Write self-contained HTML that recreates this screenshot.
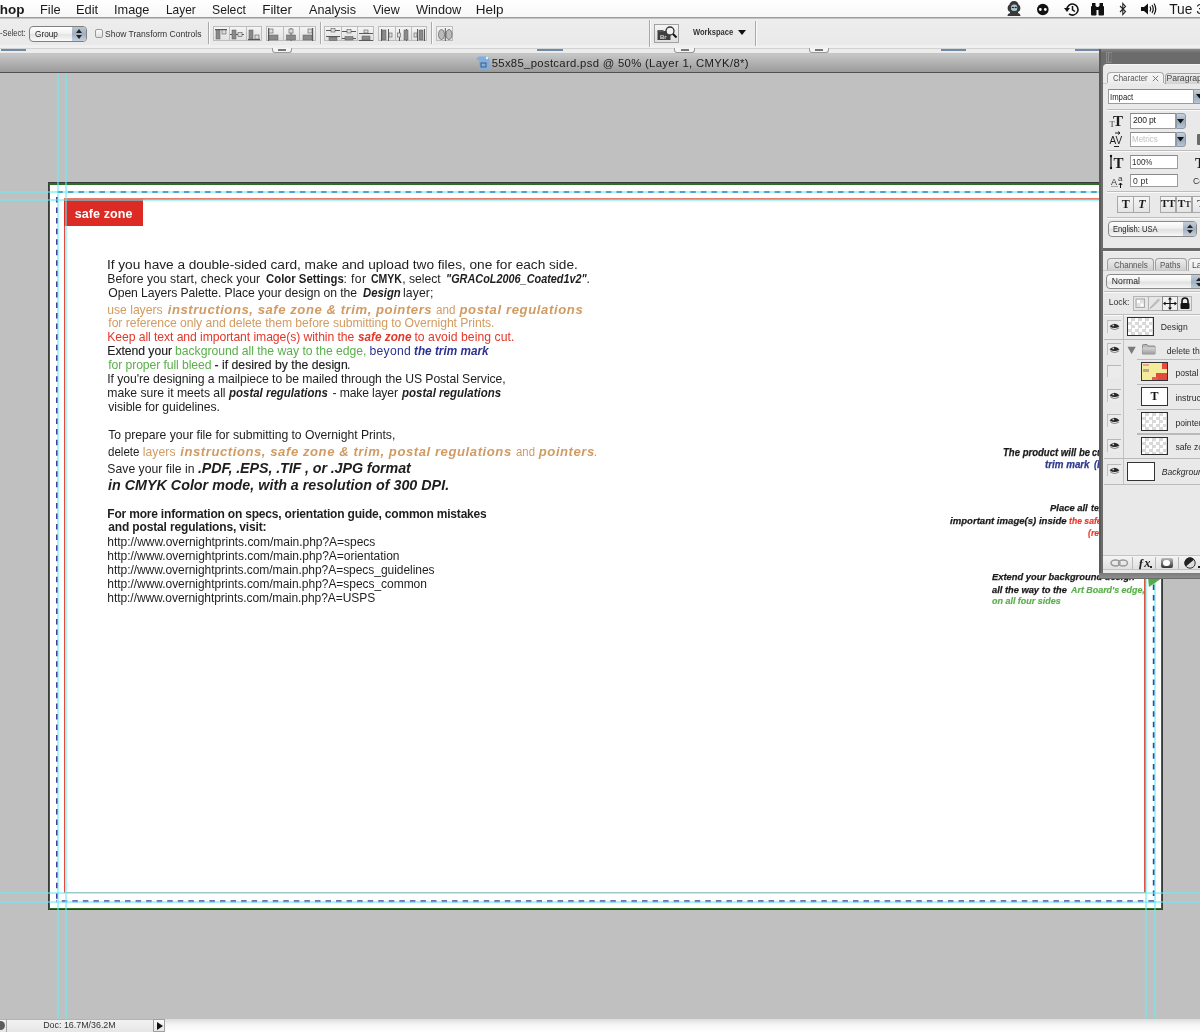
<!DOCTYPE html>
<html><head><meta charset="utf-8"><title>Photoshop</title>
<style>
html,body{margin:0;padding:0;}
html{background:#c0c0c0;}
body{width:1200px;height:1032px;overflow:hidden;position:relative;background:#c0c0c0;font-family:"Liberation Sans",sans-serif;}
div{position:absolute;box-sizing:border-box;}
.t{white-space:pre;line-height:1;}
.t b{font-weight:bold;}
body{filter:blur(0.3px);}

</style></head><body>
<div style='left:48px;top:182px;width:1115px;height:728px;background:#383c38'></div>
<div style='left:49px;top:183px;width:1113px;height:726px;background:#2e6e26'></div>
<div style='left:50px;top:185px;width:1111px;height:723px;background:#fff'></div>
<div style='left:63.6px;top:198px;width:1082.4px;height:695px;border:2px solid #e66a5a;border-top:2.8px solid #e87a6c;border-bottom:1.5px solid #e89a8c;border-left:1.6px solid #e04a3a;border-right:2px solid #e0553f'></div>
<div style='left:64px;top:199px;width:79px;height:27px;background:#dc2b24'></div>
<svg style='position:absolute;left:0;top:0' width='1200' height='1032'>
<line x1='56' y1='192' x2='1154' y2='192' stroke='#46409c' stroke-width='2' stroke-dasharray='5.5 5.05' stroke-dashoffset='-1.3'/>
<line x1='56' y1='901.3' x2='1154' y2='901.3' stroke='#46409c' stroke-width='2' stroke-dasharray='5.5 5.05' stroke-dashoffset='-5.75'/>
<line x1='57' y1='192' x2='57' y2='902' stroke='#46409c' stroke-width='2' stroke-dasharray='5.5 5.05' stroke-dashoffset='-5'/>
<line x1='1153.8' y1='192' x2='1153.8' y2='902' stroke='#46409c' stroke-width='2' stroke-dasharray='5.5 5.05' stroke-dashoffset='-2.2'/>
</svg>
<div style='left:57px;top:73px;width:2px;height:946px;background:rgba(96,236,248,0.55)'></div>
<div style='left:65px;top:73px;width:2px;height:946px;background:rgba(96,236,248,0.55)'></div>
<div style='left:1145px;top:73px;width:2px;height:946px;background:rgba(96,236,248,0.55)'></div>
<div style='left:1154px;top:73px;width:2px;height:946px;background:rgba(96,236,248,0.55)'></div>
<div style='left:0;top:191px;width:1200px;height:2px;background:rgba(96,236,248,0.55)'></div>
<div style='left:0;top:199px;width:1200px;height:2px;background:rgba(96,236,248,0.55)'></div>
<div style='left:0;top:892px;width:1200px;height:2px;background:rgba(96,236,248,0.55)'></div>
<div style='left:0;top:901px;width:1200px;height:2px;background:rgba(96,236,248,0.55)'></div>
<svg style='position:absolute;left:1148px;top:577px' width='16' height='12'><polygon points='0,1 14,1 1,10' fill='#4fae46'/></svg><div class='t' style='left:107.00px;top:258.00px;font-size:13.7px;letter-spacing:-0.032px;color:#1e1e1e;'>If you have a double-sided card, make and upload two files, one for each side.</div>
<div class='t' style='left:107.30px;top:273.00px;font-size:12.2px;letter-spacing:0.041px;color:#1e1e1e;'>Before you start, check your</div>
<div class='t' style='left:265.50px;top:273.00px;font-size:12.2px;letter-spacing:0.000px;transform:scaleX(0.9337);transform-origin:0 0;color:#1e1e1e;font-weight:bold;'>Color Settings</div>
<div class='t' style='left:343.60px;top:273.00px;font-size:12.2px;letter-spacing:0.350px;color:#1e1e1e;'>: for</div>
<div class='t' style='left:371.00px;top:273.00px;font-size:12.2px;letter-spacing:0.000px;transform:scaleX(0.8611);transform-origin:0 0;color:#1e1e1e;font-weight:bold;'>CMYK</div>
<div class='t' style='left:402.20px;top:273.00px;font-size:12.2px;letter-spacing:-0.029px;color:#1e1e1e;'>, select</div>
<div class='t' style='left:445.61px;top:273.00px;font-size:12.2px;letter-spacing:0.000px;transform:scaleX(0.8917);transform-origin:0 0;color:#1e1e1e;font-weight:bold;font-style:italic;'>"GRACoL2006_Coated1v2"</div>
<div class='t' style='left:586.60px;top:273.00px;font-size:12.2px;letter-spacing:0.000px;color:#1e1e1e;'>.</div>
<div class='t' style='left:108.30px;top:287.00px;font-size:12.2px;letter-spacing:-0.075px;color:#1e1e1e;'>Open Layers Palette. Place your design on the</div>
<div class='t' style='left:362.60px;top:287.00px;font-size:12.2px;letter-spacing:0.000px;transform:scaleX(0.9300);transform-origin:0 0;color:#1e1e1e;font-weight:bold;font-style:italic;'>Design</div>
<div class='t' style='left:403.00px;top:287.00px;font-size:12.2px;letter-spacing:0.120px;color:#1e1e1e;'>layer;</div>
<div class='t' style='left:107.30px;top:304.00px;font-size:12.2px;letter-spacing:-0.033px;color:#d19b62;'>use layers</div>
<div class='t' style='left:167.70px;top:303.00px;font-size:13.1px;letter-spacing:0.554px;color:#d19b62;font-weight:bold;font-style:italic;'>instructions, safe zone &amp; trim, pointers</div>
<div class='t' style='left:435.80px;top:304.00px;font-size:12.2px;letter-spacing:0.000px;transform:scaleX(0.9550);transform-origin:0 0;color:#d19b62;'>and</div>
<div class='t' style='left:459.40px;top:303.00px;font-size:13.1px;letter-spacing:0.624px;color:#d19b62;font-weight:bold;font-style:italic;'>postal regulations</div>
<div class='t' style='left:108.30px;top:317.00px;font-size:12.2px;letter-spacing:-0.056px;color:#d19b62;'>for reference only and delete them before submitting to Overnight Prints.</div>
<div class='t' style='left:107.30px;top:331.00px;font-size:12.2px;letter-spacing:-0.080px;color:#e2372b;'>Keep all text and important image(s) within the</div>
<div class='t' style='left:358.00px;top:331.00px;font-size:12.2px;letter-spacing:0.000px;transform:scaleX(0.9636);transform-origin:0 0;color:#e2372b;font-weight:bold;font-style:italic;'>safe zone</div>
<div class='t' style='left:414.40px;top:331.00px;font-size:12.2px;letter-spacing:0.056px;color:#e2372b;'>to avoid being cut.</div>
<div class='t' style='left:107.30px;top:345.00px;font-size:12.2px;letter-spacing:-0.040px;color:#1e1e1e;-webkit-text-stroke:0.15px #1e1e1e;'>Extend your</div>
<div class='t' style='left:175.00px;top:345.00px;font-size:12.2px;letter-spacing:-0.029px;color:#5aaf4b;'>background all the way to the edge,</div>
<div class='t' style='left:369.50px;top:345.00px;font-size:12.2px;letter-spacing:0.280px;color:#2d3290;'>beyond</div>
<div class='t' style='left:414.40px;top:345.00px;font-size:12.2px;letter-spacing:0.000px;transform:scaleX(0.9667);transform-origin:0 0;color:#2d3290;font-weight:bold;font-style:italic;'>the trim mark</div>
<div class='t' style='left:108.30px;top:359.00px;font-size:12.2px;letter-spacing:-0.095px;color:#5aaf4b;'>for proper full bleed</div>
<div class='t' style='left:214.60px;top:359.00px;font-size:12.2px;letter-spacing:0.012px;color:#1e1e1e;-webkit-text-stroke:0.15px #1e1e1e;'>- if desired by the design</div>
<div class='t' style='left:347.00px;top:359.00px;font-size:12.2px;letter-spacing:0.000px;color:#1e1e1e;'>.</div>
<div class='t' style='left:107.30px;top:373.00px;font-size:12.2px;letter-spacing:-0.068px;color:#1e1e1e;'>If you're designing a mailpiece to be mailed through the US Postal Service,</div>
<div class='t' style='left:107.30px;top:387.00px;font-size:12.2px;letter-spacing:-0.014px;color:#1e1e1e;'>make sure it meets all</div>
<div class='t' style='left:229.20px;top:387.00px;font-size:12.2px;letter-spacing:0.000px;transform:scaleX(0.9419);transform-origin:0 0;color:#1e1e1e;font-weight:bold;font-style:italic;'>postal regulations</div>
<div class='t' style='left:332.50px;top:387.00px;font-size:12.2px;letter-spacing:-0.145px;color:#1e1e1e;'>- make layer</div>
<div class='t' style='left:402.10px;top:387.00px;font-size:12.2px;letter-spacing:0.000px;transform:scaleX(0.9448);transform-origin:0 0;color:#1e1e1e;font-weight:bold;font-style:italic;'>postal regulations</div>
<div class='t' style='left:108.30px;top:401.00px;font-size:12.2px;letter-spacing:-0.068px;color:#1e1e1e;'>visible for guidelines.</div>
<div class='t' style='left:108.30px;top:429.00px;font-size:12.2px;letter-spacing:-0.029px;color:#1e1e1e;'>To prepare your file for submitting to Overnight Prints,</div>
<div class='t' style='left:108.30px;top:446.00px;font-size:12.2px;letter-spacing:0.000px;transform:scaleX(0.9485);transform-origin:0 0;color:#1e1e1e;'>delete</div>
<div class='t' style='left:142.75px;top:446.00px;font-size:12.2px;letter-spacing:0.060px;color:#d19b62;'>layers</div>
<div class='t' style='left:180.20px;top:445.00px;font-size:13.1px;letter-spacing:0.563px;color:#d19b62;font-weight:bold;font-style:italic;'>instructions, safe zone &amp; trim, postal regulations</div>
<div class='t' style='left:515.50px;top:446.00px;font-size:12.2px;letter-spacing:0.000px;transform:scaleX(0.9350);transform-origin:0 0;color:#d19b62;'>and</div>
<div class='t' style='left:538.80px;top:445.00px;font-size:13.1px;letter-spacing:0.543px;color:#d19b62;font-weight:bold;font-style:italic;'>pointers</div>
<div class='t' style='left:593.80px;top:446.00px;font-size:12.2px;letter-spacing:0.000px;color:#d19b62;'>.</div>
<div class='t' style='left:107.30px;top:463.00px;font-size:12.2px;letter-spacing:0.031px;color:#1e1e1e;'>Save your file in</div>
<div class='t' style='left:197.90px;top:461.00px;font-size:14.3px;letter-spacing:-0.100px;color:#1e1e1e;font-weight:bold;font-style:italic;'>.PDF, .EPS, .TIF , or .JPG format</div>
<div class='t' style='left:108.30px;top:478.00px;font-size:14.8px;letter-spacing:0.000px;transform:scaleX(0.9672);transform-origin:0 0;color:#1e1e1e;font-weight:bold;font-style:italic;'>in CMYK Color mode, with a resolution of 300 DPI.</div>
<div class='t' style='left:107.30px;top:508.00px;font-size:12px;letter-spacing:-0.197px;color:#1e1e1e;font-weight:bold;'>For more information on specs, orientation guide, common mistakes</div>
<div class='t' style='left:108.30px;top:521.00px;font-size:12px;letter-spacing:-0.152px;color:#1e1e1e;font-weight:bold;'>and postal regulations, visit:</div>
<div class='t' style='left:107.30px;top:536.00px;font-size:12px;letter-spacing:-0.024px;color:#1e1e1e;'>http://www.overnightprints.com/main.php?A=specs</div>
<div class='t' style='left:107.30px;top:550.00px;font-size:12px;letter-spacing:-0.031px;color:#1e1e1e;'>http://www.overnightprints.com/main.php?A=orientation</div>
<div class='t' style='left:107.30px;top:564.00px;font-size:12px;letter-spacing:-0.046px;color:#1e1e1e;'>http://www.overnightprints.com/main.php?A=specs_guidelines</div>
<div class='t' style='left:107.30px;top:578.00px;font-size:12px;letter-spacing:-0.042px;color:#1e1e1e;'>http://www.overnightprints.com/main.php?A=specs_common</div>
<div class='t' style='left:107.30px;top:592.00px;font-size:12px;letter-spacing:-0.058px;color:#1e1e1e;'>http://www.overnightprints.com/main.php?A=USPS</div>
<div class='t' style='left:74.75px;top:208.00px;font-size:12.5px;letter-spacing:0.088px;color:#fff;font-weight:bold;'>safe zone</div>
<div class='t' style='left:1002.81px;top:448.00px;font-size:10.2px;letter-spacing:0.000px;transform:scaleX(0.9380);transform-origin:0 0;color:#1b1b1b;-webkit-text-stroke:0.25px #1b1b1b;font-weight:bold;font-style:italic;'>The product will be</div>
<div class='t' style='left:1091.50px;top:448.00px;font-size:10.2px;letter-spacing:0.000px;transform:scaleX(0.9000);transform-origin:0 0;color:#1b1b1b;-webkit-text-stroke:0.25px #1b1b1b;font-weight:bold;font-style:italic;'>cut at</div>
<div class='t' style='left:1045.30px;top:460.00px;font-size:10.2px;letter-spacing:0.000px;transform:scaleX(0.9596);transform-origin:0 0;color:#2d3a90;-webkit-text-stroke:0.25px #2d3a90;font-weight:bold;font-style:italic;'>trim mark</div>
<div class='t' style='left:1094.00px;top:460.00px;font-size:10.2px;letter-spacing:0.000px;transform:scaleX(0.9000);transform-origin:0 0;color:#2d3a90;-webkit-text-stroke:0.25px #2d3a90;font-weight:bold;font-style:italic;'>(b</div>
<div class='t' style='left:1049.70px;top:503.00px;font-size:9.6px;letter-spacing:0.000px;transform:scaleX(0.9821);transform-origin:0 0;color:#1b1b1b;-webkit-text-stroke:0.25px #1b1b1b;font-weight:bold;font-style:italic;'>Place all</div>
<div class='t' style='left:1091.00px;top:503.00px;font-size:9.6px;letter-spacing:0.000px;transform:scaleX(0.9000);transform-origin:0 0;color:#1b1b1b;-webkit-text-stroke:0.25px #1b1b1b;font-weight:bold;font-style:italic;'>text</div>
<div class='t' style='left:949.50px;top:516.00px;font-size:9.6px;letter-spacing:0.000px;transform:scaleX(0.9991);transform-origin:0 0;color:#1b1b1b;-webkit-text-stroke:0.25px #1b1b1b;font-weight:bold;font-style:italic;'>important image(s) inside</div>
<div class='t' style='left:1069.00px;top:516.00px;font-size:9.6px;letter-spacing:0.000px;transform:scaleX(0.9000);transform-origin:0 0;color:#e8392c;-webkit-text-stroke:0.2px #e8392c;font-weight:bold;font-style:italic;'>the safe</div>
<div class='t' style='left:1088.40px;top:528.00px;font-size:9.6px;letter-spacing:0.000px;transform:scaleX(0.9000);transform-origin:0 0;color:#e8392c;-webkit-text-stroke:0.2px #e8392c;font-weight:bold;font-style:italic;'>(red</div>
<div class='t' style='left:991.90px;top:572.00px;font-size:9.8px;letter-spacing:0.000px;transform:scaleX(0.9540);transform-origin:0 0;color:#1b1b1b;-webkit-text-stroke:0.25px #1b1b1b;font-weight:bold;font-style:italic;'>Extend your background design</div>
<div class='t' style='left:991.90px;top:585.00px;font-size:9.8px;letter-spacing:0.000px;transform:scaleX(0.9494);transform-origin:0 0;color:#1b1b1b;-webkit-text-stroke:0.25px #1b1b1b;font-weight:bold;font-style:italic;'>all the way to the</div>
<div class='t' style='left:1071.00px;top:585.00px;font-size:9.8px;letter-spacing:0.000px;transform:scaleX(0.9086);transform-origin:0 0;color:#5aaf4b;-webkit-text-stroke:0.2px #5aaf4b;font-weight:bold;font-style:italic;'>Art Board's edge,</div>
<div class='t' style='left:991.90px;top:596.00px;font-size:9.8px;letter-spacing:0.000px;transform:scaleX(0.9133);transform-origin:0 0;color:#5aaf4b;-webkit-text-stroke:0.2px #5aaf4b;font-weight:bold;font-style:italic;'>on all four sides</div><div style='left:0;top:0;width:1200px;height:18px;background:linear-gradient(#ffffff,#f6f6f6)'></div>
<div style='left:0;top:17px;width:1200px;height:1px;background:#9c9c9c'></div>
<div style='left:0;top:18px;width:1200px;height:1px;background:#c4c4c4'></div>
<div style='left:0;top:19px;width:1200px;height:29px;background:linear-gradient(#ededed,#e9e9e9)'></div>
<div style='left:0;top:45px;width:1200px;height:3px;background:#f0f0f0'></div>
<div style='left:0;top:48px;width:1200px;height:1px;background:#d2d2d2'></div>
<div style='left:0;top:49px;width:1200px;height:4px;background:#ececec'></div>
<div style='left:1px;top:48.5px;width:25px;height:2px;background:#6f8aa6'></div>
<div style='left:537px;top:48.5px;width:26px;height:2px;background:#6f8aa6'></div>
<div style='left:941px;top:48.5px;width:25px;height:2px;background:#6f8aa6'></div>
<div style='left:1075px;top:48.5px;width:25px;height:2px;background:#6f8aa6'></div>
<div style='left:272px;top:48px;width:20px;height:5px;border:1px solid #9a9a9a;border-top:none;border-radius:0 0 3px 3px;background:#f4f4f4'></div><div style='left:278.0px;top:49px;width:8px;height:1.5px;background:#777'></div>
<div style='left:674px;top:48px;width:21px;height:5px;border:1px solid #9a9a9a;border-top:none;border-radius:0 0 3px 3px;background:#f4f4f4'></div><div style='left:680.5px;top:49px;width:8px;height:1.5px;background:#777'></div>
<div style='left:809px;top:48px;width:20px;height:5px;border:1px solid #9a9a9a;border-top:none;border-radius:0 0 3px 3px;background:#f4f4f4'></div><div style='left:815.0px;top:49px;width:8px;height:1.5px;background:#777'></div>
<div style='left:29px;top:26px;width:58px;height:16px;border:1px solid #808080;border-radius:4px;background:linear-gradient(#ffffff,#f2f2f2 45%,#e4e4e4 55%,#fafafa);overflow:hidden'><div style='left:42px;top:0;width:15px;height:14px;background:linear-gradient(#b9c5d2,#9fb0c2 50%,#c4d0dc)'></div></div>
<svg style='position:absolute;left:75px;top:28px' width='8' height='12'><polygon points='1,5 7,5 4,1' fill='#222'/><polygon points='1,7 7,7 4,11' fill='#222'/></svg>
<div style='left:94.5px;top:29px;width:8.5px;height:8.5px;border:1px solid #9a9a9a;border-radius:2px;background:linear-gradient(#fafafa,#e0e0e0)'></div>
<div style='left:207.5px;top:22px;width:1px;height:22px;background:#a9a9a9'></div><div style='left:208.5px;top:22px;width:1px;height:22px;background:#fafafa'></div>
<div style='left:212.5px;top:26px;width:49.80000000000001px;height:15px;border:1px solid #bdbdbd;background:linear-gradient(#f4f4f4,#e2e2e2)'></div><svg style='position:absolute;left:212.8px;top:26.5px' width='16' height='15'><rect x='2' y='2' width='12' height='1.2' fill='#5a5a5a'/><rect x='3' y='3' width='4' height='9' fill='#8a8a8a' stroke='#5a5a5a' stroke-width='0.5'/><rect x='9' y='3' width='4' height='4' fill='#ddd' stroke='#5a5a5a' stroke-width='0.6'/></svg><div style='left:229.1px;top:26px;width:1px;height:15px;background:#bdbdbd'></div><svg style='position:absolute;left:229.4px;top:26.5px' width='16' height='15'><rect x='1' y='7' width='14' height='1' fill='#5a5a5a'/><rect x='3' y='3' width='4' height='9' fill='#8a8a8a' stroke='#5a5a5a' stroke-width='0.5'/><rect x='9' y='5.5' width='4' height='4' fill='#ddd' stroke='#5a5a5a' stroke-width='0.6'/></svg><div style='left:245.7px;top:26px;width:1px;height:15px;background:#bdbdbd'></div><svg style='position:absolute;left:246.0px;top:26.5px' width='16' height='15'><rect x='2' y='12' width='12' height='1.2' fill='#5a5a5a'/><rect x='3' y='3' width='4' height='9' fill='#8a8a8a' stroke='#5a5a5a' stroke-width='0.5'/><rect x='9' y='8' width='4' height='4' fill='#ddd' stroke='#5a5a5a' stroke-width='0.6'/></svg>
<div style='left:265.9px;top:26px;width:49.80000000000001px;height:15px;border:1px solid #bdbdbd;background:linear-gradient(#f4f4f4,#e2e2e2)'></div><svg style='position:absolute;left:266.2px;top:26.5px' width='16' height='15'><rect x='2' y='1' width='1.2' height='13' fill='#5a5a5a'/><rect x='3' y='2' width='4' height='4' fill='#ddd' stroke='#5a5a5a' stroke-width='0.6'/><rect x='3' y='8' width='9' height='5' fill='#8a8a8a' stroke='#5a5a5a' stroke-width='0.5'/></svg><div style='left:282.5px;top:26px;width:1px;height:15px;background:#bdbdbd'></div><svg style='position:absolute;left:282.8px;top:26.5px' width='16' height='15'><rect x='7.5' y='1' width='1' height='13' fill='#5a5a5a'/><rect x='6' y='2' width='4' height='4' fill='#ddd' stroke='#5a5a5a' stroke-width='0.6'/><rect x='3.5' y='8' width='9' height='5' fill='#8a8a8a' stroke='#5a5a5a' stroke-width='0.5'/></svg><div style='left:299.1px;top:26px;width:1px;height:15px;background:#bdbdbd'></div><svg style='position:absolute;left:299.4px;top:26.5px' width='16' height='15'><rect x='13' y='1' width='1.2' height='13' fill='#5a5a5a'/><rect x='9' y='2' width='4' height='4' fill='#ddd' stroke='#5a5a5a' stroke-width='0.6'/><rect x='4' y='8' width='9' height='5' fill='#8a8a8a' stroke='#5a5a5a' stroke-width='0.5'/></svg>
<div style='left:319.5px;top:22px;width:1px;height:22px;background:#a9a9a9'></div><div style='left:320.5px;top:22px;width:1px;height:22px;background:#fafafa'></div>
<div style='left:324.4px;top:26px;width:49.5px;height:15px;border:1px solid #bdbdbd;background:linear-gradient(#f4f4f4,#e2e2e2)'></div><svg style='position:absolute;left:324.6px;top:26.5px' width='16' height='15'><rect x='1' y='3' width='14' height='1' fill='#5a5a5a'/><rect x='1' y='9' width='14' height='1' fill='#5a5a5a'/><rect x='6' y='1.5' width='4' height='3.5' fill='#ddd' stroke='#5a5a5a' stroke-width='0.6'/><rect x='4' y='10' width='8' height='3.5' fill='#8a8a8a' stroke='#5a5a5a' stroke-width='0.5'/></svg><div style='left:340.9px;top:26px;width:1px;height:15px;background:#bdbdbd'></div><svg style='position:absolute;left:341.1px;top:26.5px' width='16' height='15'><rect x='1' y='4' width='14' height='1' fill='#5a5a5a'/><rect x='1' y='11' width='14' height='1' fill='#5a5a5a'/><rect x='6' y='2.5' width='4' height='3.5' fill='#ddd' stroke='#5a5a5a' stroke-width='0.6'/><rect x='4' y='9.5' width='8' height='3.5' fill='#8a8a8a' stroke='#5a5a5a' stroke-width='0.5'/></svg><div style='left:357.4px;top:26px;width:1px;height:15px;background:#bdbdbd'></div><svg style='position:absolute;left:357.6px;top:26.5px' width='16' height='15'><rect x='1' y='6' width='14' height='1' fill='#5a5a5a'/><rect x='1' y='13' width='14' height='1' fill='#5a5a5a'/><rect x='6' y='3' width='4' height='3' fill='#ddd' stroke='#5a5a5a' stroke-width='0.6'/><rect x='4' y='9' width='8' height='4' fill='#8a8a8a' stroke='#5a5a5a' stroke-width='0.5'/></svg>
<div style='left:378.3px;top:26px;width:49.099999999999966px;height:15px;border:1px solid #bdbdbd;background:linear-gradient(#f4f4f4,#e2e2e2)'></div><svg style='position:absolute;left:378.5px;top:26.5px' width='16' height='15'><rect x='2' y='2' width='1' height='12' fill='#5a5a5a'/><rect x='9' y='2' width='1' height='12' fill='#5a5a5a'/><rect x='3' y='3' width='4' height='10' fill='#8a8a8a' stroke='#5a5a5a' stroke-width='0.5'/><rect x='10' y='6' width='3' height='4' fill='#ddd' stroke='#5a5a5a' stroke-width='0.6'/></svg><div style='left:394.7px;top:26px;width:1px;height:15px;background:#bdbdbd'></div><svg style='position:absolute;left:394.9px;top:26.5px' width='16' height='15'><rect x='4' y='2' width='1' height='12' fill='#5a5a5a'/><rect x='11' y='2' width='1' height='12' fill='#5a5a5a'/><rect x='2.5' y='6' width='3' height='4' fill='#ddd' stroke='#5a5a5a' stroke-width='0.6'/><rect x='9' y='3' width='4' height='10' fill='#8a8a8a' stroke='#5a5a5a' stroke-width='0.5'/></svg><div style='left:411.0px;top:26px;width:1px;height:15px;background:#bdbdbd'></div><svg style='position:absolute;left:411.2px;top:26.5px' width='16' height='15'><rect x='6' y='2' width='1' height='12' fill='#5a5a5a'/><rect x='13' y='2' width='1' height='12' fill='#5a5a5a'/><rect x='3' y='6' width='3' height='4' fill='#ddd' stroke='#5a5a5a' stroke-width='0.6'/><rect x='8' y='3' width='4' height='10' fill='#8a8a8a' stroke='#5a5a5a' stroke-width='0.5'/></svg>
<div style='left:431.4px;top:22px;width:1px;height:22px;background:#a9a9a9'></div><div style='left:432.4px;top:22px;width:1px;height:22px;background:#fafafa'></div>
<div style='left:436.1px;top:26px;width:16.899999999999977px;height:15px;border:1px solid #bdbdbd;background:linear-gradient(#f4f4f4,#e2e2e2)'></div><svg style='position:absolute;left:436.6px;top:26.5px' width='16' height='15'><rect x='7.8' y='1' width='1' height='13' fill='#5a5a5a'/><ellipse cx='4.5' cy='7.5' rx='3' ry='5' fill='#bbb' stroke='#5a5a5a' stroke-width='0.7'/><ellipse cx='12' cy='7.5' rx='3' ry='5' fill='#bbb' stroke='#5a5a5a' stroke-width='0.7'/></svg>
<div style='left:648.5px;top:20px;width:1px;height:27px;background:#a9a9a9'></div><div style='left:649.5px;top:20px;width:1px;height:27px;background:#fafafa'></div>
<div style='left:654px;top:24px;width:25px;height:18.5px;border:1px solid #a2a2a2;background:linear-gradient(#f5f5f5,#dedede)'></div>
<svg style='position:absolute;left:655px;top:25px' width='23' height='17'><rect x='2.5' y='6' width='13' height='9' fill='#3f3f3f'/><rect x='2.5' y='5' width='6' height='2' fill='#555'/><text x='5' y='13.5' font-size='6' font-family='Liberation Sans' font-weight='bold' fill='#ddd'>Br</text><circle cx='15' cy='6' r='4' fill='#f0f0f0' stroke='#333' stroke-width='1.3'/><line x1='18' y1='9' x2='21.5' y2='12.5' stroke='#111' stroke-width='2'/></svg>
<svg style='position:absolute;left:737px;top:29px' width='10' height='7'><polygon points='1,1 9,1 5,6' fill='#111'/></svg>
<div style='left:755px;top:21px;width:1px;height:25px;background:#a9a9a9'></div><div style='left:756px;top:21px;width:1px;height:25px;background:#fafafa'></div>
<div style='left:0;top:53px;width:1200px;height:20px;background:linear-gradient(#cacaca,#b3b3b3 45%,#999999)'></div>
<div style='left:0;top:53px;width:1200px;height:1px;background:#c4c4c4'></div>
<div style='left:0;top:72px;width:1200px;height:1px;background:#505050'></div>
<svg style='position:absolute;left:476px;top:55.5px' width='15' height='15'><path d='M0.5,2.5 L3,0.5 L10.5,0.5 L13.5,3 L13.5,13.5 L3,13.5 L3,4 L0.5,4 Z' fill='#7faee0'/><rect x='5' y='7' width='5' height='4' fill='none' stroke='#4a5a70' stroke-width='1'/><circle cx='11' cy='2' r='1.2' fill='#e8f4ff'/></svg>
<div style='left:0;top:1019px;width:1200px;height:13px;background:linear-gradient(#dcdcdc,#f4f4f4 40%,#ffffff)'></div>
<div style='left:0;top:1019px;width:165px;height:13px;background:linear-gradient(#f2f2f2,#e6e6e6);border-top:1px solid #b4b4b4'></div>
<div style='left:6px;top:1019px;width:1px;height:13px;background:#a6a6a6'></div>
<div style='left:-4px;top:1021px;width:9px;height:9px;border-radius:50%;background:#5c5c5c'></div>
<div style='left:153px;top:1019px;width:12px;height:13px;border:1px solid #a0a0a0;background:linear-gradient(#fafafa,#e6e6e6)'></div>
<svg style='position:absolute;left:156px;top:1021px' width='8' height='10'><polygon points='1,1 7,5 1,9' fill='#111'/></svg>
<svg style='position:absolute;left:1006px;top:0' width='16' height='17'><path d='M8,1 C11,1 12,3 12.5,4.5 C14,5.5 14.5,7 14.3,9 C14,11 13,11.5 12,12 L12,13 C13.5,13.3 14.5,14.5 14.5,16 L1.5,16 C1.5,14.5 2.5,13.3 4,13 L4,12 C3,11.5 2,11 1.7,9 C1.5,7 2,5.5 3.5,4.5 C4,3 5,1 8,1 Z' fill='#383838'/><ellipse cx='8.2' cy='7.8' rx='3.2' ry='3.3' fill='#b4c0cc'/><ellipse cx='6.9' cy='7.5' rx='1.2' ry='0.8' fill='#262626'/><ellipse cx='9.7' cy='7.5' rx='1.2' ry='0.8' fill='#262626'/><circle cx='6.5' cy='9.4' r='0.9' fill='#7fe4f6'/><circle cx='10' cy='9.4' r='0.9' fill='#7fe4f6'/></svg>
<svg style='position:absolute;left:1036px;top:3px' width='14' height='13'><circle cx='6.8' cy='6.5' r='5.8' fill='#111'/><circle cx='4.3' cy='6.5' r='1.4' fill='#fff'/><circle cx='9.3' cy='6.5' r='1.4' fill='#fff'/></svg>
<svg style='position:absolute;left:1063px;top:2px' width='17' height='15'><path d='M4,7.5 A5.5,5.5 0 1 1 6,11.8' fill='none' stroke='#111' stroke-width='1.6'/><polygon points='1,6 7,6 4,10' fill='#111'/><path d='M9.5,4 L9.5,7.8 L12,9.5' fill='none' stroke='#111' stroke-width='1.5'/></svg>
<svg style='position:absolute;left:1090px;top:2px' width='15' height='14'><rect x='1' y='4' width='5.5' height='9.5' rx='1' fill='#111'/><rect x='8.5' y='4' width='5.5' height='9.5' rx='1' fill='#111'/><rect x='2' y='1' width='3.5' height='4' fill='#111'/><rect x='9.5' y='1' width='3.5' height='4' fill='#111'/><rect x='5' y='5' width='5' height='3' fill='#111'/></svg>
<svg style='position:absolute;left:1118px;top:2px' width='10' height='14'><path d='M2,4 L7.5,9.5 L4.8,12.5 L4.8,1.5 L7.5,4.5 L2,10' fill='none' stroke='#222' stroke-width='1.1'/></svg>
<svg style='position:absolute;left:1140px;top:2px' width='18' height='14'><polygon points='1,5 4,5 8,1.5 8,12.5 4,9 1,9' fill='#111'/><path d='M10,4.5 Q11.5,7 10,9.5' fill='none' stroke='#111' stroke-width='1.2'/><path d='M12,3 Q14.5,7 12,11' fill='none' stroke='#111' stroke-width='1.2'/><path d='M14,1.5 Q17.5,7 14,12.5' fill='none' stroke='#111' stroke-width='1.2'/></svg>
<div class='t' style='right:1175.50px;top:3.00px;font-size:13.5px;color:#1a1a1a;font-weight:bold;'>Photoshop</div>
<div class='t' style='left:40.05px;top:3.00px;font-size:13.5px;letter-spacing:0.000px;transform:scaleX(0.9500);transform-origin:0 0;color:#1a1a1a;'>File</div>
<div class='t' style='left:76.05px;top:3.00px;font-size:13.5px;letter-spacing:0.000px;transform:scaleX(0.9545);transform-origin:0 0;color:#1a1a1a;'>Edit</div>
<div class='t' style='left:114.06px;top:3.00px;font-size:13.5px;letter-spacing:0.000px;transform:scaleX(0.9444);transform-origin:0 0;color:#1a1a1a;'>Image</div>
<div class='t' style='left:166.12px;top:3.00px;font-size:13.5px;letter-spacing:0.000px;transform:scaleX(0.8788);transform-origin:0 0;color:#1a1a1a;'>Layer</div>
<div class='t' style='left:212.40px;top:3.00px;font-size:13.5px;letter-spacing:0.000px;transform:scaleX(0.9027);transform-origin:0 0;color:#1a1a1a;'>Select</div>
<div class='t' style='left:262.20px;top:3.00px;font-size:13.5px;letter-spacing:-0.040px;color:#1a1a1a;'>Filter</div>
<div class='t' style='left:309.30px;top:3.00px;font-size:13.5px;letter-spacing:0.000px;transform:scaleX(0.9340);transform-origin:0 0;color:#1a1a1a;'>Analysis</div>
<div class='t' style='left:372.80px;top:3.00px;font-size:13.5px;letter-spacing:0.000px;transform:scaleX(0.9207);transform-origin:0 0;color:#1a1a1a;'>View</div>
<div class='t' style='left:415.50px;top:3.00px;font-size:13.5px;letter-spacing:0.000px;transform:scaleX(0.9437);transform-origin:0 0;color:#1a1a1a;'>Window</div>
<div class='t' style='left:475.80px;top:3.00px;font-size:13.5px;letter-spacing:-0.033px;color:#1a1a1a;'>Help</div>
<div class='t' style='left:1169.20px;top:3.00px;font-size:13.8px;letter-spacing:0.000px;color:#1a1a1a;'>Tue 3:15 PM</div>
<div class='t' style='left:0.00px;top:29.00px;font-size:9.3px;letter-spacing:0.000px;transform:scaleX(0.8065);transform-origin:0 0;color:#333;'>-Select:</div>
<div class='t' style='left:35.30px;top:30.00px;font-size:9.3px;letter-spacing:0.000px;transform:scaleX(0.8846);transform-origin:0 0;color:#222;'>Group</div>
<div class='t' style='left:105.05px;top:30.00px;font-size:9px;letter-spacing:0.000px;transform:scaleX(0.9500);transform-origin:0 0;color:#333;'>Show Transform Controls</div>
<div class='t' style='left:693.00px;top:28.00px;font-size:8.8px;letter-spacing:0.000px;transform:scaleX(0.8596);transform-origin:0 0;color:#333;font-weight:bold;'>Workspace</div>
<div class='t' style='left:491.70px;top:58.00px;font-size:11.3px;letter-spacing:0.324px;color:#1c1c1c;'>55x85_postcard.psd @ 50% (Layer 1, CMYK/8*)</div>
<div class='t' style='left:43.19px;top:1021.00px;font-size:8.9px;letter-spacing:0.000px;color:#333;'>Doc: 16.7M/36.2M</div><div style='left:1099px;top:48.5px;width:101px;height:530px;background:#6b6b6b'></div>
<div style='left:1099px;top:48.5px;width:101px;height:4px;background:linear-gradient(#8c8a88,#6b6b6b)'></div>
<div style='left:1099px;top:48.5px;width:1.5px;height:530px;background:#5a5a5a'></div>
<div style='left:1105.5px;top:52px;width:6.5px;height:11px;border:1px solid #888;border-right-color:#777;background:#6e6e6e'></div>
<div style='left:1108px;top:53px;width:1px;height:9px;background:#8a8a8a'></div>
<div style='left:1103px;top:64px;width:97px;height:184px;background:#e9e9e9;border-radius:4px 0 0 0;border-top:1px solid #f6f6f6'></div>
<div style='left:1103px;top:83px;width:97px;height:1px;background:#c8c8c8'></div>
<div style='left:1107px;top:72px;width:56.5px;height:12px;border:1px solid #a8a8a8;border-bottom:none;border-radius:4px 4px 0 0;background:linear-gradient(#f7f7f7,#ececec)'></div>
<div style='left:1107px;top:83px;width:56.5px;height:1px;background:#ececec'></div>
<div style='left:1165px;top:72.5px;width:40px;height:11px;border:1px solid #a4a4a4;border-bottom:none;border-radius:4px 4px 0 0;background:linear-gradient(#ececec,#d2d2d2)'></div>
<svg style='position:absolute;left:1152px;top:75px' width='7' height='7'><path d='M0.8,0.8 L6.2,6.2 M6.2,0.8 L0.8,6.2' stroke='#777' stroke-width='1'/></svg>
<div style='left:1108px;top:88.7px;width:85.5px;height:15.799999999999997px;border:1px solid #9c9c9c;border-top-color:#8a8a8a;background:#fff'></div>
<div style='left:1193px;top:88.7px;width:13px;height:15.799999999999997px;border:1px solid #8c9aa8;border-radius:0 3px 3px 0;background:linear-gradient(#c9d3dd,#97a9bb 50%,#b8c6d4)'></div><svg style='position:absolute;left:1196.0px;top:94.1px' width='7' height='5'><polygon points='0,0 7,0 3.5,4.5' fill='#111'/></svg>
<div style='left:1106.5px;top:108.5px;width:94px;height:1px;background:#bdbdbd'></div><div style='left:1106.5px;top:109.5px;width:94px;height:1px;background:#fafafa'></div>
<svg style='position:absolute;left:1109px;top:112px' width='18' height='17'><text x='4' y='14' font-family='Liberation Serif' font-weight='bold' font-size='15' fill='#1a1a1a'>T</text><text x='0.5' y='15' font-family='Liberation Serif' font-weight='bold' font-size='8' fill='#777'>T</text></svg>
<div style='left:1130px;top:113.2px;width:46px;height:15.799999999999997px;border:1px solid #9c9c9c;border-top-color:#8a8a8a;background:#fff'></div>
<div style='left:1175.5px;top:113.2px;width:10.0px;height:15.799999999999997px;border:1px solid #8c9aa8;border-radius:0 3px 3px 0;background:linear-gradient(#c9d3dd,#97a9bb 50%,#b8c6d4)'></div><svg style='position:absolute;left:1177.0px;top:118.6px' width='7' height='5'><polygon points='0,0 7,0 3.5,4.5' fill='#111'/></svg>
<svg style='position:absolute;left:1109px;top:131px' width='18' height='17'><text x='0.5' y='13' font-family='Liberation Sans' font-size='10' fill='#1a1a1a'>AV</text><path d='M6,2 L11,2 M9,0.5 L11,2 L9,3.5 M5,15.5 L10,15.5' stroke='#222' stroke-width='1' fill='none'/></svg>
<div style='left:1130px;top:131.5px;width:46px;height:15.699999999999989px;border:1px solid #9c9c9c;border-top-color:#8a8a8a;background:#fff'></div>
<div style='left:1175.5px;top:131.5px;width:10.0px;height:15.699999999999989px;border:1px solid #8c9aa8;border-radius:0 3px 3px 0;background:linear-gradient(#c9d3dd,#97a9bb 50%,#b8c6d4)'></div><svg style='position:absolute;left:1177.0px;top:136.85px' width='7' height='5'><polygon points='0,0 7,0 3.5,4.5' fill='#111'/></svg>
<div style='left:1197px;top:134px;width:4px;height:11px;background:#6a6a6a;border-radius:1px'></div>
<div style='left:1106.5px;top:150px;width:94px;height:1px;background:#bdbdbd'></div><div style='left:1106.5px;top:151px;width:94px;height:1px;background:#fafafa'></div>
<svg style='position:absolute;left:1109px;top:154px' width='20' height='17'><text x='4.5' y='14' font-family='Liberation Serif' font-weight='bold' font-size='15' fill='#1a1a1a'>T</text><path d='M2,2 L2,14' stroke='#111' stroke-width='1.2'/><circle cx='2' cy='2' r='1.2' fill='#111'/><circle cx='2' cy='14' r='1.2' fill='#111'/></svg>
<div style='left:1130px;top:155.2px;width:47.5px;height:13.800000000000011px;border:1px solid #9c9c9c;border-top-color:#8a8a8a;background:#fff'></div>
<svg style='position:absolute;left:1111px;top:173px' width='18' height='16'><text x='0' y='12' font-family='Liberation Sans' font-size='9' fill='#333'>A</text><text x='7' y='8' font-family='Liberation Sans' font-size='8' fill='#333'>a</text><path d='M9.5,10 L9.5,15 M7.8,12 L9.5,10 L11.2,12' stroke='#111' stroke-width='1' fill='none'/><path d='M0,13.5 L7,13.5' stroke='#999' stroke-width='0.8'/></svg>
<div style='left:1130px;top:173.5px;width:47.5px;height:13.199999999999989px;border:1px solid #9c9c9c;border-top-color:#8a8a8a;background:#fff'></div>
<svg style='position:absolute;left:1195px;top:154px' width='6' height='17'><text x='0' y='14' font-family='Liberation Serif' font-weight='bold' font-size='15' fill='#1a1a1a'>T</text></svg>
<div style='left:1106.5px;top:190.8px;width:94px;height:1px;background:#bdbdbd'></div><div style='left:1106.5px;top:191.8px;width:94px;height:1px;background:#fafafa'></div>
<div style='left:1117.4px;top:196.4px;width:16.59999999999991px;height:16.2px;border:1px solid #a8a8a8;background:linear-gradient(#f6f6f6,#e4e4e4)'></div><div class='t' style='left:1117.4px;top:198px;width:16.59999999999991px;text-align:center;font-family:"Liberation Serif",serif;font-weight:bold;font-size:12px;color:#1a1a1a;'>T</div>
<div style='left:1133.4px;top:196.4px;width:17.0px;height:16.2px;border:1px solid #a8a8a8;background:linear-gradient(#f6f6f6,#e4e4e4)'></div><div class='t' style='left:1133.4px;top:198px;width:17.0px;text-align:center;font-family:"Liberation Serif",serif;font-weight:bold;font-size:12px;color:#1a1a1a;font-style:italic;'>T</div>
<div style='left:1159.6px;top:196.4px;width:16.90000000000009px;height:16.2px;border:1px solid #a8a8a8;background:linear-gradient(#f6f6f6,#e4e4e4)'></div><div class='t' style='left:1159.6px;top:198px;width:16.90000000000009px;text-align:center;font-family:"Liberation Serif",serif;font-weight:bold;font-size:11px;color:#1a1a1a;'>TT</div>
<div style='left:1175.8px;top:196.4px;width:16.700000000000045px;height:16.2px;border:1px solid #a8a8a8;background:linear-gradient(#f6f6f6,#e4e4e4)'></div><div class='t' style='left:1175.8px;top:198px;width:16.700000000000045px;text-align:center;font-family:"Liberation Serif",serif;font-weight:bold;font-size:11px;color:#1a1a1a;'>T<span style='font-size:8px'>T</span></div>
<div style='left:1191.8px;top:196.4px;width:18.200000000000045px;height:16.2px;border:1px solid #a8a8a8;background:linear-gradient(#f6f6f6,#e4e4e4)'></div><div class='t' style='left:1191.8px;top:198px;width:18.200000000000045px;text-align:center;font-family:"Liberation Serif",serif;font-weight:bold;font-size:11px;color:#1a1a1a;'>T</div>
<div style='left:1106.5px;top:216.8px;width:94px;height:1px;background:#bdbdbd'></div><div style='left:1106.5px;top:217.8px;width:94px;height:1px;background:#fafafa'></div>
<div style='left:1107.7px;top:221.3px;width:89.5px;height:15.5px;border:1px solid #8a8a8a;border-radius:4px;background:linear-gradient(#ffffff,#f0f0f0 45%,#e0e0e0 55%,#f8f8f8);overflow:hidden'><div style='left:74px;top:0;width:15px;height:14px;background:linear-gradient(#c3cdd8,#9fb0c2 50%,#c4d0dc)'></div></div>
<svg style='position:absolute;left:1186px;top:223px' width='8' height='12'><polygon points='1,5 7,5 4,1.5' fill='#222'/><polygon points='1,7 7,7 4,10.5' fill='#222'/></svg>
<div style='left:1103px;top:248px;width:97px;height:3px;background:#6a6a6a'></div>
<div style='left:1103px;top:251px;width:97px;height:322px;background:#e9e9e9;border-top:1px solid #f4f4f4'></div>
<div style='left:1103px;top:269.5px;width:97px;height:1px;background:#c8c8c8'></div>
<div style='left:1107px;top:258.3px;width:47px;height:11.5px;border:1px solid #a0a0a0;border-bottom:none;border-radius:4px 4px 0 0;background:linear-gradient(#ececec,#d0d0d0)'></div>
<div style='left:1155px;top:258.3px;width:32px;height:11.5px;border:1px solid #a0a0a0;border-bottom:none;border-radius:4px 4px 0 0;background:linear-gradient(#ececec,#d0d0d0)'></div>
<div style='left:1188px;top:257.5px;width:20px;height:13px;border:1px solid #a8a8a8;border-bottom:none;border-radius:4px 4px 0 0;background:linear-gradient(#f7f7f7,#ececec)'></div>
<div style='left:1106.2px;top:273.6px;width:100px;height:15.7px;border:1px solid #8a8a8a;border-radius:4px;background:linear-gradient(#ffffff,#f0f0f0 45%,#e0e0e0 55%,#f8f8f8);overflow:hidden'><div style='left:84px;top:0;width:15px;height:14px;background:linear-gradient(#c3cdd8,#9fb0c2 50%,#c4d0dc)'></div></div>
<svg style='position:absolute;left:1195px;top:275.5px' width='8' height='12'><polygon points='1,5 7,5 4,1.5' fill='#222'/><polygon points='1,7 7,7 4,10.5' fill='#222'/></svg>
<div style='left:1104px;top:291.3px;width:96px;height:1px;background:#bdbdbd'></div><div style='left:1104px;top:292.3px;width:96px;height:1px;background:#fafafa'></div>
<div style='left:1133.2px;top:296.2px;width:58.8px;height:14.5px;border:1px solid #b4b4b4;background:#e6e6e6'></div>
<div style='left:1147.9px;top:296.2px;width:1px;height:14.5px;background:#b4b4b4'></div>
<div style='left:1162px;top:296.2px;width:1px;height:14.5px;background:#b4b4b4'></div>
<div style='left:1177.3px;top:296.2px;width:1px;height:14.5px;background:#b4b4b4'></div>
<div style='left:1162px;top:296.2px;width:16px;height:14.5px;border:1px solid #8c8c8c;background:#f2f2f2'></div>
<svg style='position:absolute;left:1135px;top:298px' width='11' height='11'><rect x='1' y='1' width='8.5' height='8.5' fill='#e0e0e0' stroke='#aaa' stroke-width='1'/><rect x='2' y='2' width='3' height='3' fill='#fff'/><rect x='5.5' y='5.5' width='3' height='3' fill='#fff'/></svg>
<svg style='position:absolute;left:1149px;top:297px' width='12' height='13'><path d='M1,11.5 Q3,8 9.5,2 L10.5,3 Q5,9.5 1,11.5 Z' fill='#c8c8c8' stroke='#a0a0a0' stroke-width='0.6'/></svg>
<svg style='position:absolute;left:1163px;top:297px' width='14' height='13'><path d='M7,1 L7,12 M1.5,6.5 L12.5,6.5' stroke='#111' stroke-width='1.2'/><polygon points='7,0 5,2.5 9,2.5' fill='#111'/><polygon points='7,13 5,10.5 9,10.5' fill='#111'/><polygon points='0,6.5 2.5,4.5 2.5,8.5' fill='#111'/><polygon points='14,6.5 11.5,4.5 11.5,8.5' fill='#111'/></svg>
<svg style='position:absolute;left:1179px;top:297px' width='12' height='13'><path d='M3,6 L3,4.5 Q3,1 6,1 Q9,1 9,4.5 L9,6' fill='none' stroke='#111' stroke-width='1.6'/><rect x='1.5' y='6' width='9' height='6' rx='1' fill='#111'/></svg>
<div style='left:1104px;top:314px;width:96px;height:1px;background:#bdbdbd'></div><div style='left:1104px;top:315px;width:96px;height:1px;background:#fafafa'></div>
<div style='left:1123.2px;top:315px;width:1.3px;height:169px;background:#c2c2c2'></div>
<div style='left:1104px;top:338.5px;width:96px;height:1.3px;background:#bababa'></div>
<div style='left:1137.2px;top:358.8px;width:62.799999999999955px;height:1.3px;background:#bababa'></div>
<div style='left:1137.2px;top:384px;width:62.799999999999955px;height:1.3px;background:#bababa'></div>
<div style='left:1137.2px;top:408.7px;width:62.799999999999955px;height:1.3px;background:#bababa'></div>
<div style='left:1137.2px;top:433.4px;width:62.799999999999955px;height:1.3px;background:#bababa'></div>
<div style='left:1104px;top:458.1px;width:96px;height:1.3px;background:#bababa'></div>
<div style='left:1104px;top:484.1px;width:96px;height:1.3px;background:#bababa'></div>
<div style='left:1107px;top:320px;width:13.5px;height:12.5px;border-top:1.5px solid #b8b8b8;border-left:1.5px solid #c0c0c0;background:#ebebeb'></div><svg style='position:absolute;left:1108.5px;top:322px' width='11' height='9'><path d='M0.5,4.2 Q5.5,-0.8 10.5,4.2 Q5.5,8 0.5,4.2 Z' fill='#262626'/><path d='M1.2,5.6 Q5.5,9.2 10,5.8' fill='none' stroke='#8a8a8a' stroke-width='1.1'/><circle cx='4.3' cy='3.4' r='0.9' fill='#d0d0d0'/></svg>
<div style='left:1107px;top:342.6px;width:13.5px;height:12.5px;border-top:1.5px solid #b8b8b8;border-left:1.5px solid #c0c0c0;background:#ebebeb'></div><svg style='position:absolute;left:1108.5px;top:344.6px' width='11' height='9'><path d='M0.5,4.2 Q5.5,-0.8 10.5,4.2 Q5.5,8 0.5,4.2 Z' fill='#262626'/><path d='M1.2,5.6 Q5.5,9.2 10,5.8' fill='none' stroke='#8a8a8a' stroke-width='1.1'/><circle cx='4.3' cy='3.4' r='0.9' fill='#d0d0d0'/></svg>
<div style='left:1107px;top:364.5px;width:13.5px;height:12.5px;border-top:1.5px solid #b8b8b8;border-left:1.5px solid #c0c0c0;background:#ebebeb'></div>
<div style='left:1107px;top:389.4px;width:13.5px;height:12.5px;border-top:1.5px solid #b8b8b8;border-left:1.5px solid #c0c0c0;background:#ebebeb'></div><svg style='position:absolute;left:1108.5px;top:391.4px' width='11' height='9'><path d='M0.5,4.2 Q5.5,-0.8 10.5,4.2 Q5.5,8 0.5,4.2 Z' fill='#262626'/><path d='M1.2,5.6 Q5.5,9.2 10,5.8' fill='none' stroke='#8a8a8a' stroke-width='1.1'/><circle cx='4.3' cy='3.4' r='0.9' fill='#d0d0d0'/></svg>
<div style='left:1107px;top:414.3px;width:13.5px;height:12.5px;border-top:1.5px solid #b8b8b8;border-left:1.5px solid #c0c0c0;background:#ebebeb'></div><svg style='position:absolute;left:1108.5px;top:416.3px' width='11' height='9'><path d='M0.5,4.2 Q5.5,-0.8 10.5,4.2 Q5.5,8 0.5,4.2 Z' fill='#262626'/><path d='M1.2,5.6 Q5.5,9.2 10,5.8' fill='none' stroke='#8a8a8a' stroke-width='1.1'/><circle cx='4.3' cy='3.4' r='0.9' fill='#d0d0d0'/></svg>
<div style='left:1107px;top:439px;width:13.5px;height:12.5px;border-top:1.5px solid #b8b8b8;border-left:1.5px solid #c0c0c0;background:#ebebeb'></div><svg style='position:absolute;left:1108.5px;top:441px' width='11' height='9'><path d='M0.5,4.2 Q5.5,-0.8 10.5,4.2 Q5.5,8 0.5,4.2 Z' fill='#262626'/><path d='M1.2,5.6 Q5.5,9.2 10,5.8' fill='none' stroke='#8a8a8a' stroke-width='1.1'/><circle cx='4.3' cy='3.4' r='0.9' fill='#d0d0d0'/></svg>
<div style='left:1107px;top:463.5px;width:13.5px;height:12.5px;border-top:1.5px solid #b8b8b8;border-left:1.5px solid #c0c0c0;background:#ebebeb'></div><svg style='position:absolute;left:1108.5px;top:465.5px' width='11' height='9'><path d='M0.5,4.2 Q5.5,-0.8 10.5,4.2 Q5.5,8 0.5,4.2 Z' fill='#262626'/><path d='M1.2,5.6 Q5.5,9.2 10,5.8' fill='none' stroke='#8a8a8a' stroke-width='1.1'/><circle cx='4.3' cy='3.4' r='0.9' fill='#d0d0d0'/></svg>
<div style='left:1126.8px;top:317.1px;width:27.40000000000009px;height:18.69999999999999px;border:1.5px solid #2e2e2e;background:conic-gradient(#d9d9d9 25%,#fff 0 50%,#d9d9d9 0 75%,#fff 0) 0 0/7.0px 7.0px'></div>
<svg style='position:absolute;left:1127px;top:346px' width='10' height='9'><polygon points='0.5,0.8 8.8,0.8 4.6,8' fill='#7a7a7a'/></svg>
<svg style='position:absolute;left:1142px;top:344px' width='14' height='11'><path d='M0.5,1.5 Q0.5,0.5 1.5,0.5 L5,0.5 L6,2 L12.5,2 Q13,2 13,3 L13,10 L0.5,10 Z' fill='#b8b8b8' stroke='#777' stroke-width='0.8'/><rect x='0.5' y='3.5' width='12.5' height='6.5' fill='url(#fg)'/><defs><linearGradient id='fg' x1='0' y1='0' x2='0' y2='1'><stop offset='0' stop-color='#d8d8d8'/><stop offset='1' stop-color='#9c9c9c'/></linearGradient></defs></svg>
<div style='left:1140.8px;top:362px;width:27.2px;height:18.8px;border:1.5px solid #333;background:#f4ec9a;overflow:hidden'><div style='left:1px;top:1px;width:6px;height:2px;background:#f0a0a0'></div><div style='left:1px;top:6px;width:6px;height:3px;background:#b8a890'></div><div style='left:20px;top:0;width:6px;height:6px;background:#e84a40'></div><div style='left:14px;top:10px;width:12px;height:8px;background:#e04a40'></div><div style='left:10px;top:14px;width:6px;height:4px;background:#e85a50'></div></div>
<div style='left:1140.8px;top:386.9px;width:27.2px;height:18.8px;border:1.5px solid #333;background:#fff'></div>
<div class='t' style='left:1140.8px;top:390px;width:27.2px;text-align:center;font-family:"Liberation Serif",serif;font-weight:bold;font-size:12px;color:#111'>T</div>
<div style='left:1140.8px;top:411.8px;width:27.200000000000045px;height:18.80000000000001px;border:1.5px solid #2e2e2e;background:conic-gradient(#d9d9d9 25%,#fff 0 50%,#d9d9d9 0 75%,#fff 0) 0 0/7.0px 7.0px'></div>
<div style='left:1140.8px;top:436.5px;width:27.200000000000045px;height:18.80000000000001px;border:1.5px solid #2e2e2e;background:conic-gradient(#d9d9d9 25%,#fff 0 50%,#d9d9d9 0 75%,#fff 0) 0 0/7.0px 7.0px'></div>
<div style='left:1126.5px;top:462px;width:28px;height:18.6px;border:1.5px solid #333;background:#fff'></div>
<div style='left:1103px;top:555.4px;width:97px;height:15px;background:linear-gradient(#f4f4f4,#e0e0e0);border-top:1px solid #c4c4c4;border-bottom:1px solid #c4c4c4'></div>
<div style='left:1131.5px;top:557px;width:1px;height:12px;background:#b8b8b8'></div>
<div style='left:1154.5px;top:557px;width:1px;height:12px;background:#b8b8b8'></div>
<div style='left:1178px;top:557px;width:1px;height:12px;background:#b8b8b8'></div>
<svg style='position:absolute;left:1110px;top:558px' width='19' height='10'><ellipse cx='5.5' cy='5' rx='4.5' ry='3' fill='none' stroke='#999' stroke-width='1.5'/><ellipse cx='13' cy='5' rx='4.5' ry='3' fill='none' stroke='#999' stroke-width='1.5'/></svg>
<div class='t' style='left:1138px;top:557px;font-family:"Liberation Serif",serif;font-style:italic;font-weight:bold;font-size:12.5px;color:#222'>&#402;x</div>
<div style='left:1150px;top:566px;width:2px;height:2px;background:#222'></div>
<div style='left:1160.6px;top:557.5px;width:12px;height:10.5px;border-radius:2px;background:linear-gradient(#bbb,#333)'></div><div style='left:1163px;top:559.5px;width:6.5px;height:6.5px;border-radius:50%;background:#fff'></div>
<svg style='position:absolute;left:1183.5px;top:556.5px' width='12' height='12'><circle cx='6' cy='6' r='5.2' fill='#ddd' stroke='#333' stroke-width='1'/><path d='M1.8,9.6 L10.2,2.4 A5.2,5.2 0 0 0 1.8,9.6 Z' fill='#222'/></svg>
<div style='left:1198px;top:566px;width:2px;height:2px;background:#222'></div>
<div style='left:1099px;top:573px;width:101px;height:5px;background:linear-gradient(#7a7a7a,#8e8e8e)'></div>
<div class='t' style='left:1113.30px;top:74.00px;font-size:8.6px;letter-spacing:0.000px;transform:scaleX(0.9211);transform-origin:0 0;color:#555;'>Character</div>
<div class='t' style='left:1166.50px;top:74.00px;font-size:8.6px;letter-spacing:0.000px;color:#444;'>Paragraph</div>
<div class='t' style='left:1109.60px;top:93.00px;font-size:8.6px;letter-spacing:0.000px;transform:scaleX(0.9000);transform-origin:0 0;color:#222;'>Impact</div>
<div class='t' style='left:1133.00px;top:116.00px;font-size:8.6px;letter-spacing:-0.200px;color:#222;'>200 pt</div>
<div class='t' style='left:1132.07px;top:135.00px;font-size:8.6px;letter-spacing:0.000px;transform:scaleX(0.9259);transform-origin:0 0;color:#c0c0c0;'>Metrics</div>
<div class='t' style='left:1132.07px;top:158.00px;font-size:8.6px;letter-spacing:0.000px;transform:scaleX(0.9286);transform-origin:0 0;color:#333;'>100%</div>
<div class='t' style='left:1133.00px;top:177.00px;font-size:8.6px;letter-spacing:0.167px;color:#333;'>0 pt</div>
<div class='t' style='left:1193.00px;top:177.00px;font-size:8.6px;letter-spacing:0.000px;color:#333;'>Co</div>
<div class='t' style='left:1112.62px;top:225.00px;font-size:8.6px;letter-spacing:0.000px;transform:scaleX(0.8800);transform-origin:0 0;color:#222;'>English: USA</div>
<div class='t' style='left:1113.50px;top:261.00px;font-size:8.6px;letter-spacing:0.000px;transform:scaleX(0.9306);transform-origin:0 0;color:#555;'>Channels</div>
<div class='t' style='left:1159.57px;top:261.00px;font-size:8.6px;letter-spacing:0.000px;transform:scaleX(0.9286);transform-origin:0 0;color:#555;'>Paths</div>
<div class='t' style='left:1192.00px;top:261.00px;font-size:8.6px;letter-spacing:0.000px;color:#555;'>La</div>
<div class='t' style='left:1111.80px;top:277.00px;font-size:8.6px;letter-spacing:0.100px;color:#222;'>Normal</div>
<div class='t' style='left:1108.80px;top:298.00px;font-size:8.6px;letter-spacing:0.000px;color:#333;'>Lock:</div>
<div class='t' style='left:1160.70px;top:323.00px;font-size:8.6px;letter-spacing:0.060px;color:#2a2a2a;'>Design</div>
<div class='t' style='left:1166.70px;top:347.00px;font-size:8.6px;letter-spacing:0.000px;color:#2a2a2a;'>delete them</div>
<div class='t' style='left:1175.40px;top:369.00px;font-size:8.6px;letter-spacing:0.000px;color:#2a2a2a;'>postal regulations</div>
<div class='t' style='left:1175.40px;top:394.00px;font-size:8.6px;letter-spacing:0.000px;color:#2a2a2a;'>instructions</div>
<div class='t' style='left:1175.40px;top:419.00px;font-size:8.6px;letter-spacing:0.000px;color:#2a2a2a;'>pointers</div>
<div class='t' style='left:1175.40px;top:443.00px;font-size:8.6px;letter-spacing:0.000px;color:#2a2a2a;'>safe zone</div>
<div class='t' style='left:1161.70px;top:468.00px;font-size:8.6px;letter-spacing:0.000px;color:#2a2a2a;font-style:italic;'>Background</div>
</body></html>
